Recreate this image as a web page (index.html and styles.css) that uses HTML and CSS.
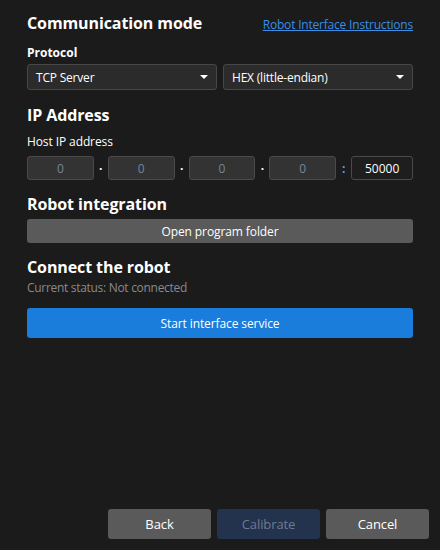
FILE: index.html
```html
<!DOCTYPE html>
<html>
<head>
<meta charset="utf-8">
<link rel="stylesheet" href="styles.css">
</head>
<body>
<div class="window">
  <div class="content">
    <div class="head-row">
      <h2 class="title">Communication mode</h2>
      <a class="link" href="#">Robot Interface Instructions</a>
    </div>
    <div class="label-bold">Protocol</div>
    <div class="select-row">
      <div class="select"><span>TCP Server</span><span class="caret"></span></div>
      <div class="select"><span>HEX (little-endian)</span><span class="caret"></span></div>
    </div>

    <h2 class="title sec-ip">IP Address</h2>
    <div class="label">Host IP address</div>
    <div class="ip-row">
      <div class="ip-box">0</div><span class="sep">·</span>
      <div class="ip-box">0</div><span class="sep">·</span>
      <div class="ip-box">0</div><span class="sep">·</span>
      <div class="ip-box">0</div><span class="sep colon">:</span>
      <div class="port-box">50000</div>
    </div>

    <h2 class="title sec-int">Robot integration</h2>
    <div class="btn btn-gray btn-wide">Open program folder</div>

    <h2 class="title sec-conn">Connect the robot</h2>
    <div class="status">Current status: Not connected</div>
    <div class="btn btn-blue btn-wide">Start interface service</div>
  </div>
  <div class="footer">
    <div class="btn btn-gray btn-foot">Back</div>
    <div class="btn btn-disabled btn-foot">Calibrate</div>
    <div class="btn btn-gray btn-foot">Cancel</div>
  </div>
</div>
</body>
</html>
```

FILE: styles.css
```css
html, body {
  margin: 0;
  padding: 0;
  background: #1b1b1b;
}
body {
  font-family: "Open Sans", "Noto Sans", sans-serif;
  color: #ffffff;
  width: 440px;
  height: 550px;
  overflow: hidden;
}
.window {
  width: 440px;
  height: 550px;
  display: flex;
  flex-direction: column;
  box-sizing: border-box;
}
.content {
  flex: 1;
  padding: 12px 27px 0 27px;
  display: flex;
  flex-direction: column;
}
.head-row {
  display: flex;
  justify-content: space-between;
  align-items: baseline;
}
.title {
  margin: 0;
  font-size: 16px;
  font-weight: 700;
  line-height: 22px;
  letter-spacing: -0.1px;
}
.link {
  color: #3a8ee6;
  font-size: 12px;
  text-decoration: underline;
  letter-spacing: -0.2px;
}
.label-bold {
  margin-top: 11px;
  font-size: 12px;
  font-weight: 700;
  line-height: 16px;
}
.label {
  margin-top: 8px;
  font-size: 12px;
  line-height: 16px;
  letter-spacing: -0.1px;
}
.select-row {
  margin-top: 3px;
  display: flex;
  gap: 6px;
}
.select {
  flex: 1;
  height: 26px;
  box-sizing: border-box;
  background: #2b2b2b;
  border: 1px solid #474747;
  border-radius: 3px;
  display: flex;
  align-items: center;
  justify-content: space-between;
  padding: 0 8px 0 8px;
  font-size: 12px;
  letter-spacing: -0.2px;
}
.caret {
  width: 0;
  height: 0;
  border-left: 4px solid transparent;
  border-right: 4px solid transparent;
  border-top: 4px solid #ffffff;
}
.sec-ip {
  margin-top: 14px;
}
.ip-row {
  margin-top: 6px;
  display: flex;
  align-items: center;
}
.ip-box {
  width: 67px;
  height: 24px;
  box-sizing: border-box;
  background: #333333;
  border: 1px solid #4a4a4a;
  border-radius: 3px;
  display: flex;
  align-items: center;
  justify-content: center;
  font-size: 12px;
  color: #76869a;
}
.sep {
  width: 14px;
  text-align: center;
  font-size: 12px;
  color: #ffffff;
  font-weight: 700;
}
.colon {
  width: 15px;
  color: #5aa0e8;
}
.port-box {
  width: 62px;
  height: 24px;
  box-sizing: border-box;
  background: #1e1e1e;
  border: 1px solid #4a4a4a;
  border-radius: 3px;
  display: flex;
  align-items: center;
  justify-content: center;
  font-size: 12px;
  color: #ffffff;
}
.sec-int {
  margin-top: 13px;
}
.btn {
  display: flex;
  align-items: center;
  justify-content: center;
  box-sizing: border-box;
  border-radius: 3px;
  font-size: 12px;
  letter-spacing: -0.1px;
}
.btn-wide {
  width: 100%;
}
.btn-gray {
  background: #5a5a5a;
  color: #ffffff;
}
.sec-int + .btn {
  margin-top: 4px;
  height: 24px;
}
.sec-conn {
  margin-top: 13px;
}
.status {
  margin-top: 2px;
  font-size: 12px;
  line-height: 16px;
  color: #8a8a8a;
  letter-spacing: -0.3px;
}
.btn-blue {
  margin-top: 12px;
  height: 30px;
  background: #1a7ddb;
  color: #ffffff;
}
.footer {
  display: flex;
  justify-content: flex-end;
  gap: 6px;
  padding: 0 11px 11px 0;
}
.btn-foot {
  width: 103px;
  height: 30px;
  font-size: 13px;
}
.btn-disabled {
  background: #23324d;
  color: #6c7b92;
}
```
